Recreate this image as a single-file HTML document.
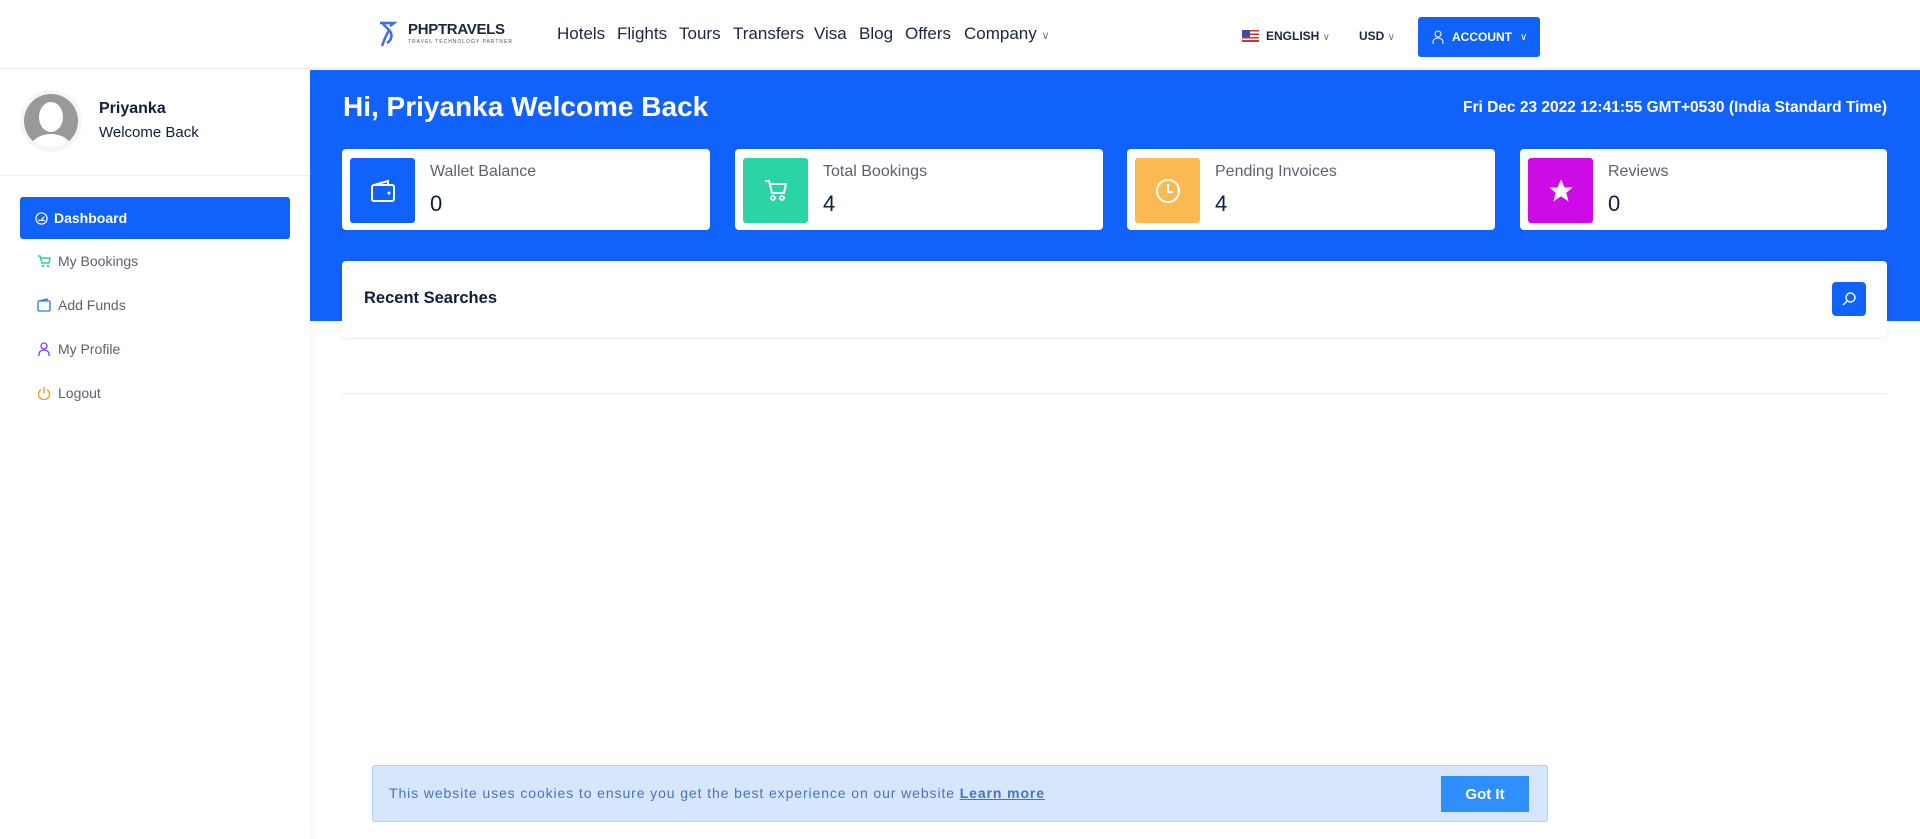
<!DOCTYPE html>
<html><head><meta charset="utf-8"><style>
*{box-sizing:border-box;margin:0;padding:0}
body{width:1920px;height:839px;overflow:hidden;background:#fff;font-family:"Liberation Sans",sans-serif;position:relative;color:#0f1f3a}
.a{position:absolute}
.nav{left:0;top:0;width:1920px;height:69px;background:#fff;border-bottom:1px solid #eceef2}
.nl{top:24px;font-size:17px;color:#1b2740}
.hero{left:310px;top:70px;width:1610px;height:251px;background:#1162fb}
.card{background:#fff;border-radius:4px;height:81px;top:149px}
.ib{left:8px;top:9px;width:65px;height:65px;border-radius:3px;display:flex;align-items:center;justify-content:center}
.lab{left:88px;top:14px;font-size:16px;color:#5b6270}
.val{left:88px;top:42px;font-size:22px;color:#0f1f3a}
.mi{left:34px;font-size:14px;color:#5b6270;display:flex;align-items:center}
.ic{width:20px;display:inline-flex;justify-content:center;align-items:center;margin-right:4px}
</style></head><body>
<div class="a nav"></div>
<div class="a" style="left:378px;top:20px">
<svg width="22" height="28" viewBox="0 0 22 28"><path d="M2 3h14l-4 3M5 4l6 6-4 8-3 8M11 10c4 4 3 10-2 13" stroke="#3f6cf0" stroke-width="2.5" fill="none"/></svg></div>
<div class="a" style="left:408px;top:21px;font-size:15px;font-weight:bold;color:#1b2740;letter-spacing:-0.3px">PHPTRAVELS</div>
<div class="a" style="left:408px;top:39px;font-size:5px;color:#555;letter-spacing:1px">TRAVEL TECHNOLOGY PARTNER</div>
<div class="a nl" style="left:557px">Hotels</div>
<div class="a nl" style="left:617px">Flights</div>
<div class="a nl" style="left:679px">Tours</div>
<div class="a nl" style="left:733px">Transfers</div>
<div class="a nl" style="left:814px">Visa</div>
<div class="a nl" style="left:859px">Blog</div>
<div class="a nl" style="left:905px">Offers</div>
<div class="a nl" style="left:964px">Company <span style="font-size:11px;color:#777">&#8744;</span></div>
<div class="a" style="left:1242px;top:30px;width:17px;height:12px;background:repeating-linear-gradient(#c33 0 1.7px,#fff 1.7px 3.4px)"><div style="width:8px;height:7px;background:#3c4f9a"></div></div>
<div class="a" style="left:1266px;top:29px;font-size:12px;font-weight:bold;color:#1b2740">ENGLISH <span style="font-weight:normal;color:#777;font-size:10px">&#8744;</span></div>
<div class="a" style="left:1359px;top:29px;font-size:12px;font-weight:bold;color:#1b2740">USD <span style="font-weight:normal;color:#777;font-size:10px">&#8744;</span></div>
<div class="a" style="left:1418px;top:17px;width:122px;height:40px;background:#1162fb;border-radius:3px;color:#fff;font-size:12px;font-weight:bold;display:flex;align-items:center;padding-left:14px;gap:8px">
<svg width="12" height="14" viewBox="0 0 12 14"><circle cx="6" cy="4" r="3" stroke="#fff" fill="none"/><path d="M1 14v-2a5 4 0 0 1 10 0v2" stroke="#fff" fill="none"/></svg>ACCOUNT <span style="font-weight:normal;font-size:10px">&#8744;</span></div>

<div class="a" style="left:0;top:70px;width:310px;height:769px;background:#fff;box-shadow:2px 0 12px rgba(0,0,0,.05)"></div>
<div class="a" style="left:24px;top:94px;width:54px;height:54px;border-radius:50%;background:#999;overflow:hidden;box-shadow:0 0 0 4px #f5f5f5">
<div class="a" style="left:15px;top:8px;width:24px;height:30px;border-radius:50%;background:#fff"></div>
<div class="a" style="left:6px;top:40px;width:42px;height:30px;border-radius:50%;background:#fff"></div></div>
<div class="a" style="left:99px;top:100px;font-size:16px;font-weight:bold;color:#0f1f3a">Priyanka</div>
<div class="a" style="left:99px;top:124px;font-size:15px;color:#0f1f3a">Welcome Back</div>
<div class="a" style="left:0;top:175px;width:310px;height:1px;background:#eceef2"></div>
<div class="a" style="left:20px;top:197px;width:270px;height:42px;background:#1162fb;border-radius:3px;color:#fff;font-size:14px;font-weight:bold;display:flex;align-items:center;padding-left:14px">
<span class="ic" style="width:14px;margin-right:6px"><svg width="13" height="13" viewBox="0 0 14 14"><circle cx="7" cy="7" r="6" stroke="#fff" stroke-width="1.3" fill="none"/><path d="M7 8l3-3M3.5 9h7" stroke="#fff" stroke-width="1.3"/></svg></span>Dashboard</div>
<div class="a mi" style="top:253px"><span class="ic"><svg width="14" height="13" viewBox="0 0 14 13"><path d="M1 1h2l2 7h7l1-5H4" stroke="#2ad4a4" stroke-width="1.4" fill="none"/><circle cx="6" cy="11" r="1.2" fill="#2ad4a4"/><circle cx="11" cy="11" r="1.2" fill="#2ad4a4"/></svg></span>My Bookings</div>
<div class="a mi" style="top:297px"><span class="ic"><svg width="14" height="14" viewBox="0 0 14 14"><rect x="1" y="3" width="12" height="10" rx="1" stroke="#2a7de1" stroke-width="1.3" fill="none"/><path d="M2 3l8-2v2" stroke="#2a7de1" stroke-width="1.3" fill="none"/></svg></span>Add Funds</div>
<div class="a mi" style="top:341px"><span class="ic"><svg width="12" height="14" viewBox="0 0 12 14"><circle cx="6" cy="4" r="3" stroke="#8b3cf5" stroke-width="1.3" fill="none"/><path d="M1 14v-2a5 4 0 0 1 10 0v2" stroke="#8b3cf5" stroke-width="1.3" fill="none"/></svg></span>My Profile</div>
<div class="a mi" style="top:385px"><span class="ic"><svg width="14" height="14" viewBox="0 0 14 14"><path d="M4 3.5a5.5 5.5 0 1 0 6 0M7 1v6" stroke="#f59b2a" stroke-width="1.4" fill="none"/></svg></span>Logout</div>

<div class="a hero"></div>
<div class="a" style="left:343px;top:91px;font-size:28px;font-weight:bold;color:#fff">Hi, Priyanka Welcome Back</div>
<div class="a" style="right:33px;top:99px;font-size:15.5px;font-weight:bold;color:#fff">Fri Dec 23 2022 12:41:55 GMT+0530 (India Standard Time)</div>

<div class="a card" style="left:342px;width:368px"><div class="a ib" style="background:#1162fb"><svg width="26" height="24" viewBox="0 0 26 24"><rect x="2" y="6" width="22" height="16" rx="2" stroke="#fff" stroke-width="2" fill="none"/><path d="M4 6l14-4v4" stroke="#fff" stroke-width="2" fill="none"/><circle cx="19" cy="14" r="1.5" fill="#fff"/></svg></div><div class="a lab">Wallet Balance</div><div class="a val">0</div></div>
<div class="a card" style="left:735px;width:368px"><div class="a ib" style="background:#2ad4a4"><svg width="26" height="26" viewBox="0 0 26 26"><path d="M2 3h4l3 12h12l2-9H7" stroke="#fff" stroke-width="2" fill="none"/><circle cx="10" cy="20" r="2" stroke="#fff" stroke-width="1.8" fill="none"/><circle cx="19" cy="20" r="2" stroke="#fff" stroke-width="1.8" fill="none"/></svg></div><div class="a lab">Total Bookings</div><div class="a val">4</div></div>
<div class="a card" style="left:1127px;width:368px"><div class="a ib" style="background:#fbb952"><svg width="28" height="28" viewBox="0 0 28 28"><circle cx="14" cy="14" r="11" stroke="#fff" stroke-width="2" fill="none"/><path d="M14 7v8h5" stroke="#fff" stroke-width="2" fill="none"/></svg></div><div class="a lab">Pending Invoices</div><div class="a val">4</div></div>
<div class="a card" style="left:1520px;width:367px"><div class="a ib" style="background:#cc0be6"><svg width="28" height="28" viewBox="0 0 24 24"><path d="M12 2l3 7h7l-5.5 4.5 2 7.5-6.5-4.5-6.5 4.5 2-7.5L2 9h7z" fill="#fff"/></svg></div><div class="a lab">Reviews</div><div class="a val">0</div></div>

<div class="a" style="left:342px;top:261px;width:1545px;height:76px;background:#fff;border-radius:4px;box-shadow:0 2px 6px rgba(0,0,0,.07)"></div>
<div class="a" style="left:364px;top:289px;font-size:16.5px;font-weight:bold;color:#0f1f3a">Recent Searches</div>
<div class="a" style="left:1832px;top:282px;width:34px;height:34px;background:#1162fb;border-radius:4px;display:flex;align-items:center;justify-content:center"><svg width="16" height="16" viewBox="0 0 16 16"><circle cx="9.5" cy="6.5" r="4.5" stroke="#fff" stroke-width="1.4" fill="none"/><path d="M6.3 9.7L2 14" stroke="#fff" stroke-width="1.4"/></svg></div>
<div class="a" style="left:342px;top:393px;width:1545px;height:1px;background:#eceef2"></div>

<div class="a" style="left:372px;top:765px;width:1176px;height:57px;background:#d6e6fd;border:1px solid #b4d0fb;border-radius:3px"></div>
<div class="a" style="left:389px;top:785px;font-size:14px;color:#4a72c0;letter-spacing:0.9px">This website uses cookies to ensure you get the best experience on our website <u style="font-weight:bold">Learn more</u></div>
<div class="a" style="left:1441px;top:776px;width:88px;height:36px;background:#2f8ffc;color:#fff;font-size:15px;font-weight:bold;display:flex;align-items:center;justify-content:center">Got It</div>
</body></html>
